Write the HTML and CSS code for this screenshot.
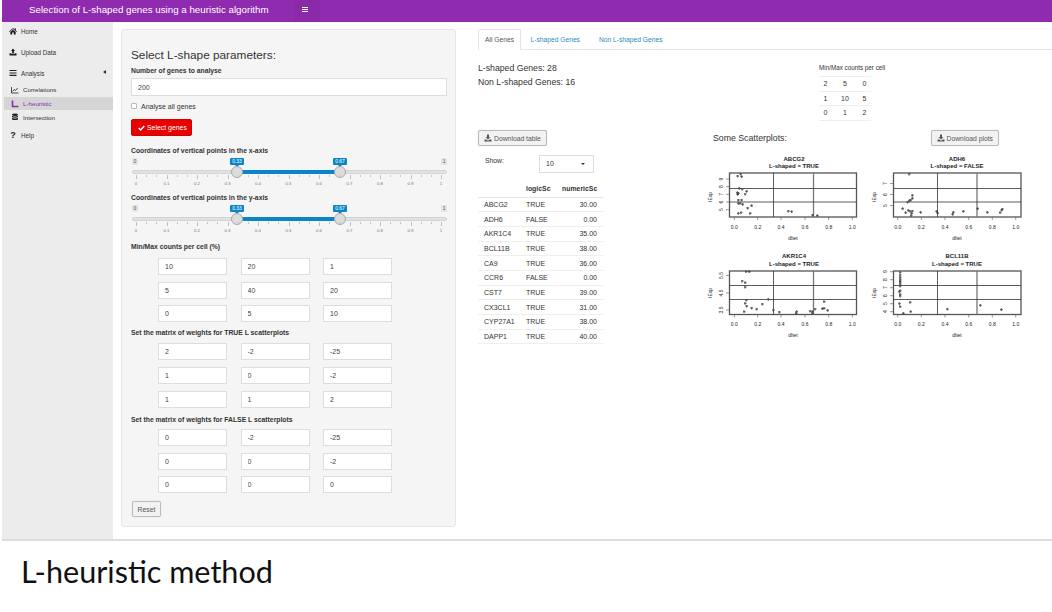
FILE: index.html
```html
<!DOCTYPE html>
<html lang="en">
<head>
    <meta charset="UTF-8">
    <title>Selection of L-shaped genes</title>
    <link rel="stylesheet" href="styles.css">
</head>
<body>
    <div class="app">
        <header class="topbar">
            <div class="brand">Selection of L-shaped genes using a heuristic algorithm</div>
            <div class="toggle">
                <svg width="6" height="5" viewBox="0 0 6 5"><path d="M0 0h6v1H0zM0 2h6v1H0zM0 4h6v1H0z" fill="#fff"/></svg>
            </div>
        </header>

        <div class="body-row">
            <nav class="sidebar">
                <a class="nav-item">
                    <svg class="nav-icon" viewBox="0 0 8 8"><path d="M4 1 0 4.400l.5.5L4 2l3.500 2.900.5-.5-1.200-1V1.200h-1v1.300zM1.300 5 4 2.800 6.700 5v2.400H4.800V5.600H3.200v1.800H1.300z" fill="#222"/></svg>
                    Home
                </a>
                <a class="nav-item">
                    <svg class="nav-icon" viewBox="0 0 8 8"><path d="M4 .5 6 3H4.900v2.400H3.100V3H2zM.5 5.200h2v.9h3v-.9h2v2.300h-7z" fill="#222"/></svg>
                    Upload Data
                </a>
                <a class="nav-item">
                    <svg class="nav-icon" viewBox="0 0 8 8"><path d="M.5 1h7v1.100h-7zM.5 3.400h7v1.100h-7zM.5 5.800h7v1.100h-7z" fill="#222"/></svg>
                    Analysis
                    <span class="caret"></span>
                </a>
                <a class="sub-item">
                    <svg class="nav-icon" viewBox="0 0 8 8"><path d="M.5 1v6h7" fill="none" stroke="#222" stroke-width=".8"/><path d="m1.500 5.500 1.700-2 1.300 1 2.200-2.500" fill="none" stroke="#222" stroke-width=".8"/></svg>
                    Correlations
                </a>
                <a class="sub-item active">
                    <svg class="nav-icon" viewBox="0 0 8 8"><path d="M1.500 .5v6h6" fill="none" stroke="#8e2bb0" stroke-width="1.600"/></svg>
                    L-heuristic
                </a>
                <a class="sub-item">
                    <svg class="nav-icon" viewBox="0 0 8 8"><ellipse cx="4" cy="1.800" rx="3" ry="1.200" fill="#222"/><path d="M1 2.700c1 1 5 1 6 0v1.400c-1 1-5 1-6 0zM1 4.800c1 1 5 1 6 0v1.400c-1 1.200-5 1.200-6 0z" fill="#222"/></svg>
                    Intersection
                </a>
                <a class="nav-item">
                    <span class="nav-icon help">?</span>
                    Help
                </a>
            </nav>

            <main class="content">
                <section class="panel">
                    <h2>Select L-shape parameters:</h2>
                    <label class="field-label">Number of genes to analyse</label>
                    <input class="text-input" type="text" value="200">
                    <label class="check-row"><span class="check-box"></span>Analyse all genes</label>
                    <button class="btn-select">
                        <svg width="7" height="6" viewBox="0 0 7 6"><path d="M.7 3 2.700 5 6.300 1" fill="none" stroke="#fff" stroke-width="1.500"/></svg>
                        Select genes
                    </button>

                    <label class="field-label slider-label">Coordinates of vertical points in the x-axis</label>
                    <div class="slider">
                        <span class="end end-min">0</span>
                        <span class="end end-max">1</span>
                        <span class="tip tip-from">0.33</span>
                        <span class="tip tip-to">0.67</span>
                        <div class="track"></div>
                        <div class="bar"></div>
                        <span class="handle handle-from"></span>
                        <span class="handle handle-to"></span>
                        <div class="ticks"></div>
                        <div class="tick-labels">
                            <span>0</span><span>0.1</span><span>0.2</span><span>0.3</span><span>0.4</span><span>0.5</span><span>0.6</span><span>0.7</span><span>0.8</span><span>0.9</span><span>1</span>
                        </div>
                    </div>

                    <label class="field-label">Coordinates of vertical points in the y-axis</label>
                    <div class="slider">
                        <span class="end end-min">0</span>
                        <span class="end end-max">1</span>
                        <span class="tip tip-from">0.33</span>
                        <span class="tip tip-to">0.67</span>
                        <div class="track"></div>
                        <div class="bar"></div>
                        <span class="handle handle-from"></span>
                        <span class="handle handle-to"></span>
                        <div class="ticks"></div>
                        <div class="tick-labels">
                            <span>0</span><span>0.1</span><span>0.2</span><span>0.3</span><span>0.4</span><span>0.5</span><span>0.6</span><span>0.7</span><span>0.8</span><span>0.9</span><span>1</span>
                        </div>
                    </div>

                    <label class="field-label counts-label">Min/Max counts per cell (%)</label>
                    <div class="matrix">
                        <input type="text" value="10"><input type="text" value="20"><input type="text" value="1">
                        <input type="text" value="5"><input type="text" value="40"><input type="text" value="20">
                        <input type="text" value="0"><input type="text" value="5"><input type="text" value="10">
                    </div>

                    <label class="field-label true-label">Set the matrix of weights for TRUE L scatterplots</label>
                    <div class="matrix true-matrix">
                        <input type="text" value="2"><input type="text" value="-2"><input type="text" value="-25">
                        <input type="text" value="1"><input type="text" value="0"><input type="text" value="-2">
                        <input type="text" value="1"><input type="text" value="1"><input type="text" value="2">
                    </div>

                    <label class="field-label false-label">Set the matrix of weights for FALSE L scatterplots</label>
                    <div class="matrix false-matrix">
                        <input type="text" value="0"><input type="text" value="-2"><input type="text" value="-25">
                        <input type="text" value="0"><input type="text" value="0"><input type="text" value="-2">
                        <input type="text" value="0"><input type="text" value="0"><input type="text" value="0">
                    </div>

                    <button class="btn btn-reset">Reset</button>
                </section>

                <section class="results">
                    <div class="tabs">
                        <a class="tab active">All Genes</a>
                        <a class="tab">L-shaped Genes</a>
                        <a class="tab">Non L-shaped Genes</a>
                    </div>

                    <div class="summary-row">
                        <div class="counts">
                            <p>L-shaped Genes: 28</p>
                            <p>Non L-shaped Genes: 16</p>
                        </div>
                        <div class="minmax">
                            <div class="minmax-title">Min/Max counts per cell</div>
                            <table>
                                <tr><td>2</td><td>5</td><td>0</td></tr>
                                <tr><td>1</td><td>10</td><td>5</td></tr>
                                <tr><td>0</td><td>1</td><td>2</td></tr>
                            </table>
                        </div>
                    </div>

                    <div class="detail-row">
                        <div class="table-col">
                            <button class="btn">
                                <svg width="8" height="8" viewBox="0 0 8 8"><path d="M3 .5h2v2.700h1.500L4 5.600 1.500 3.200H3zM.5 5.500h1.700L4 6.800l1.800-1.300h1.700v2h-7z" fill="#555"/></svg>
                                Download table
                            </button>
                            <div class="show-row">
                                <span class="show-label">Show:</span>
                                <div class="select-box">10<span class="select-caret"></span></div>
                            </div>
                            <table class="gene-table">
                                <thead>
                                    <tr><th></th><th>logicSc</th><th class="num">numericSc</th></tr>
                                </thead>
                                <tbody>
                                    <tr><td>ABCG2</td><td>TRUE</td><td class="num">30.00</td></tr>
                                    <tr><td>ADH6</td><td>FALSE</td><td class="num">0.00</td></tr>
                                    <tr><td>AKR1C4</td><td>TRUE</td><td class="num">35.00</td></tr>
                                    <tr><td>BCL11B</td><td>TRUE</td><td class="num">38.00</td></tr>
                                    <tr><td>CA9</td><td>TRUE</td><td class="num">36.00</td></tr>
                                    <tr><td>CCR6</td><td>FALSE</td><td class="num">0.00</td></tr>
                                    <tr><td>CST7</td><td>TRUE</td><td class="num">39.00</td></tr>
                                    <tr><td>CX3CL1</td><td>TRUE</td><td class="num">31.00</td></tr>
                                    <tr><td>CYP27A1</td><td>TRUE</td><td class="num">38.00</td></tr>
                                    <tr><td>DAPP1</td><td>TRUE</td><td class="num">40.00</td></tr>
                                </tbody>
                            </table>
                        </div>

                        <div class="plots-col">
                            <div class="plots-head">
                                <span>Some Scatterplots:</span>
                                <button class="btn">
                                    <svg width="8" height="8" viewBox="0 0 8 8"><path d="M3 .5h2v2.700h1.500L4 5.600 1.500 3.200H3zM.5 5.500h1.700L4 6.800l1.800-1.300h1.700v2h-7z" fill="#555"/></svg>
                                    Download plots
                                </button>
                            </div>
                            <div class="plots">
                                <svg class="plot" viewBox="0 0 180 95" width="180" height="95">
                                    <defs>
                                        <marker id="plus" viewBox="0 0 3 3" refX="1.500" refY="1.500" markerWidth="3" markerHeight="3" markerUnits="userSpaceOnUse">
                                            <path d="M0 1.500h3M1.500 0v3" stroke="#444" stroke-width=".55" fill="none"/>
                                        </marker>
                                    </defs>
                                    <g transform="translate(10 0)">
                                        <text class="plot-title" x="94" y="10.500">ABCG2</text>
                                        <text class="plot-title" x="94" y="18">L-shaped =  TRUE</text>
                                        <rect class="frame" x="29.500" y="23" width="127" height="44"/>
                                        <path class="vline" d="M73.500 23v44"/>
                                        <path class="vline thick" d="M113.500 23v44"/>
                                        <path class="vline" d="M29.500 38.500h127M29.500 52h127"/>
                                        <path class="axis" d="M34.300 67v3M57.700 67v3M81 67v3M105 67v3M128.700 67v3M152.300 67v3M26 29h3.500M26 36.700h3.500M26 44.300h3.500M26 52h3.500M26 59.700h3.500"/>
                                        <g class="tick-y"><text transform="translate(23 29) rotate(-90)">9</text><text transform="translate(23 36.700) rotate(-90)">8</text><text transform="translate(23 44.300) rotate(-90)">7</text><text transform="translate(23 52) rotate(-90)">6</text><text transform="translate(23 59.700) rotate(-90)">5</text></g>
                                        <g class="tick-x"><text x="34.300" y="78.500">0.0</text><text x="57.700" y="78.500">0.2</text><text x="81" y="78.500">0.4</text><text x="105" y="78.500">0.6</text><text x="128.700" y="78.500">0.8</text><text x="152.300" y="78.500">1.0</text></g>
                                        <text class="axis-name" x="93" y="89.500">dltet</text>
                                        <text class="axis-name" transform="translate(12 47) rotate(-90)">tExp</text>
                                        <path class="points" marker-start="url(#plus)" marker-mid="url(#plus)" marker-end="url(#plus)" d="M40.700 24h0M37.700 26h0M41.700 26.700h0M39.300 38.300h0M42 39h0M37.300 42.700h0M38.300 43.300h0M37.700 44.300h0M46.700 41.300h0M45 44h0M38.300 50h0M41.700 50h0M38.300 53.300h0M40 53.300h0M42.700 54.300h0M51.700 55.700h0M47.700 58h0M41 62.700h0M38.300 63.300h0M50 63.300h0M88.300 61h0M91.700 61.700h0M112.700 65h0M117.300 65.700h0"/>
                                    </g>
                                </svg>
                                <svg class="plot" viewBox="0 0 180 95" width="180" height="95">
                                    <g transform="translate(10 0)">
                                        <text class="plot-title" x="77" y="10.500">ADH6</text>
                                        <text class="plot-title" x="77" y="18">L-shaped =  FALSE</text>
                                        <rect class="frame" x="13.500" y="23" width="127.500" height="44"/>
                                        <path class="vline" d="M57.500 23v44"/>
                                        <path class="vline thick" d="M97 23v44"/>
                                        <path class="vline" d="M13.500 38.500H141M13.500 52H141"/>
                                        <path class="axis" d="M17.700 67v3M41.300 67v3M65 67v3M88.700 67v3M112.300 67v3M135.700 67v3M10 33.500h3.500M10 44.500h3.500M10 55.500h3.500"/>
                                        <g class="tick-y"><text transform="translate(6.500 33.500) rotate(-90)">7</text><text transform="translate(6.500 44.500) rotate(-90)">6</text><text transform="translate(6.500 55.500) rotate(-90)">5</text></g>
                                        <g class="tick-x"><text x="17.700" y="78.500">0.0</text><text x="41.300" y="78.500">0.2</text><text x="65" y="78.500">0.4</text><text x="88.700" y="78.500">0.6</text><text x="112.300" y="78.500">0.8</text><text x="135.700" y="78.500">1.0</text></g>
                                        <text class="axis-name" x="77" y="89.500">dltet</text>
                                        <text class="axis-name" transform="translate(-4 47) rotate(-90)">tExp</text>
                                        <path class="points" marker-start="url(#plus)" marker-mid="url(#plus)" marker-end="url(#plus)" d="M29 24h0M32.300 45.300h0M32.300 48.300h0M30.700 50h0M29.300 50.700h0M27.700 52h0M22.700 58.700h0M25.700 62.700h0M28.300 60.300h0M30 61.300h0M32.300 61h0M31.700 63.300h0M31 65.700h0M40.700 62.300h0M56.700 61.300h0M57.700 63h0M73.300 62.300h0M72.700 64.300h0M83.300 61.300h0M97.700 58.700h0M107.300 62.300h0M122.300 59h0M120 62.700h0M121.700 60h0"/>
                                    </g>
                                </svg>
                                <svg class="plot" viewBox="0 0 180 95" width="180" height="95">
                                    <g transform="translate(10 0)">
                                        <text class="plot-title" x="94" y="13">AKR1C4</text>
                                        <text class="plot-title" x="94" y="20.500">L-shaped =  TRUE</text>
                                        <rect class="frame" x="29.500" y="26" width="127" height="43.500"/>
                                        <path class="vline" d="M73.500 26v43.500"/>
                                        <path class="vline thick" d="M113.500 26v43.500"/>
                                        <path class="vline" d="M29.500 40.500h127M29.500 54.500h127"/>
                                        <path class="axis" d="M34.300 69.500v3M57.700 69.500v3M81 69.500v3M105 69.500v3M128.700 69.500v3M152.300 69.500v3M26 30.500h3.500M26 48h3.500M26 65h3.500"/>
                                        <g class="tick-y"><text transform="translate(23 30.500) rotate(-90)">5.5</text><text transform="translate(23 48) rotate(-90)">4.5</text><text transform="translate(23 65) rotate(-90)">3.5</text></g>
                                        <g class="tick-x"><text x="34.300" y="80.500">0.0</text><text x="57.700" y="80.500">0.2</text><text x="81" y="80.500">0.4</text><text x="105" y="80.500">0.6</text><text x="128.700" y="80.500">0.8</text><text x="152.300" y="80.500">1.0</text></g>
                                        <text class="axis-name" x="93" y="92.300">dltet</text>
                                        <text class="axis-name" transform="translate(12 48) rotate(-90)">tExp</text>
                                        <path class="points" marker-start="url(#plus)" marker-mid="url(#plus)" marker-end="url(#plus)" d="M46 26.700h0M49.300 26.700h0M42 36h0M45 37.700h0M45 42h0M46.300 55h0M45 58.300h0M46.700 61h0M51.700 63h0M56.700 64h0M62.300 59h0M68.300 54.300h0M44 66.700h0M73.300 65h0M79.300 67h0M96.700 66.700h0M96 68.300h0M110 66h0M112.300 66.700h0M115 64h0M124 56.700h0M122.300 63.700h0M124 63.300h0M127.700 65.300h0M112.300 68.300h0"/>
                                    </g>
                                </svg>
                                <svg class="plot" viewBox="0 0 180 95" width="180" height="95">
                                    <g transform="translate(10 0)">
                                        <text class="plot-title" x="77" y="13">BCL11B</text>
                                        <text class="plot-title" x="77" y="20.500">L-shaped =  TRUE</text>
                                        <rect class="frame" x="13.500" y="26" width="127.500" height="43.500"/>
                                        <path class="vline" d="M57.500 26v43.500"/>
                                        <path class="vline thick" d="M97 26v43.500"/>
                                        <path class="vline" d="M13.500 40.500H141M13.500 54.500H141"/>
                                        <path class="axis" d="M17.700 69.500v3M41.300 69.500v3M65 69.500v3M88.700 69.500v3M112.300 69.500v3M135.700 69.500v3M10 66.700h3.500M10 58.700h3.500M10 50.700h3.500M10 42.700h3.500M10 34.700h3.500M10 26.700h3.500"/>
                                        <g class="tick-y"><text transform="translate(6.500 66.700) rotate(-90)">4</text><text transform="translate(6.500 58.700) rotate(-90)">5</text><text transform="translate(6.500 50.700) rotate(-90)">6</text><text transform="translate(6.500 42.700) rotate(-90)">7</text><text transform="translate(6.500 34.700) rotate(-90)">8</text><text transform="translate(6.500 26.700) rotate(-90)">9</text></g>
                                        <g class="tick-x"><text x="17.700" y="80.500">0.0</text><text x="41.300" y="80.500">0.2</text><text x="65" y="80.500">0.4</text><text x="88.700" y="80.500">0.6</text><text x="112.300" y="80.500">0.8</text><text x="135.700" y="80.500">1.0</text></g>
                                        <text class="axis-name" x="77" y="92.300">dltet</text>
                                        <text class="axis-name" transform="translate(-4 48) rotate(-90)">tExp</text>
                                        <path class="points" marker-start="url(#plus)" marker-mid="url(#plus)" marker-end="url(#plus)" d="M20 27.300h0M20 30h0M20 32.300h0M20 34.300h0M20 36h0M20 37.300h0M20 39.300h0M20 41h0M20 45.700h0M19.300 46.700h0M20 49.300h0M20 51h0M19.300 58.700h0M20 61.700h0M30 57.300h0M30.700 66.700h0M23.300 68.300h0M67.300 64h0M100.300 60.300h0M121.300 64.700h0"/>
                                    </g>
                                </svg>
                            </div>
                        </div>
                    </div>
                </section>
            </main>
        </div>
    </div>

    <div class="caption">L-heuristic method</div>
</body>
</html>
```

FILE: styles.css
```css
* {
    box-sizing: border-box;
}

body {
    font-family: "Liberation Sans", Arial, sans-serif;
    font-size: 7px;
    color: #333;
    margin: 0;
    height: 612px;
    overflow: hidden;
    background-color: white;
}

.app {
    height: 541px;
    margin-left: 2px;
    border-bottom: 2px solid #ddd;
    display: flex;
    flex-direction: column;
}

/* Top bar */
.topbar {
    height: 22px;
    flex-shrink: 0;
    display: flex;
    background-color: #8e2bae;
    color: white;
}

.brand {
    width: 293px;
    padding-left: 27px;
    font-size: 9.750px;
    line-height: 19px;
}

.toggle {
    width: 25px;
    padding: 7px 0 0 7px;
    background-color: #8a2aa8;
}

.toggle svg {
    display: block;
}

.body-row {
    flex: 1;
    display: flex;
    min-height: 0;
}

/* Sidebar */
.sidebar {
    width: 111px;
    flex-shrink: 0;
    background-color: #ececec;
    color: #333;
}

.nav-item {
    display: flex;
    align-items: center;
    height: 21px;
    padding: 0 0 3px 7px;
    font-size: 6.300px;
    gap: 4px;
    position: relative;
}

.sub-item {
    display: flex;
    align-items: center;
    height: 13.700px;
    margin-left: 2px;
    padding-left: 7px;
    font-size: 6.200px;
    gap: 4px;
}

.nav-item + .sub-item {
    margin-top: -2px;
}

.sub-item + .nav-item {
    margin-top: 2px;
}

.sub-item.active {
    background-color: #d5d5d5;
    color: #8e2bae;
}

.nav-icon {
    width: 8px;
    height: 8px;
    flex-shrink: 0;
}

.help {
    font-size: 9px;
    font-weight: bold;
    line-height: 8px;
    text-align: center;
    color: #222;
}

.caret {
    position: absolute;
    right: 7px;
    top: 6px;
    border-style: solid;
    border-width: 2.500px 3px 2.500px 0;
    border-color: transparent #333 transparent transparent;
}

/* Main area */
.content {
    flex: 1;
    display: flex;
    gap: 22px;
    padding: 7px 0 0 8px;
    min-width: 0;
}

.panel {
    width: 335px;
    height: 498px;
    flex-shrink: 0;
    padding: 17px 8px 0 9px;
    background-color: #f5f5f5;
    border: 1px solid #e6e6e6;
    border-radius: 3px;
}

h2 {
    font-weight: normal;
    font-size: 11.800px;
    line-height: 16px;
    margin: 0;
}

.field-label {
    display: block;
    font-weight: bold;
    font-size: 6.800px;
    line-height: 10px;
}

h2 + .field-label {
    margin-top: 3px;
}

input {
    font-family: inherit;
    font-size: 7px;
    color: #444;
    background-color: white;
    border: 1px solid #ddd;
    padding: 0 0 0 6px;
    outline: none;
    min-width: 0;
    width: 100%;
}

.text-input {
    display: block;
    height: 18px;
    margin-top: 2px;
}

.check-row {
    display: flex;
    align-items: center;
    gap: 4px;
    height: 10px;
    margin-top: 5px;
    font-size: 7px;
}

.check-box {
    width: 6px;
    height: 6px;
    background-color: white;
    border: 1px solid #bbb;
    border-radius: 1px;
}

.btn-select {
    display: flex;
    align-items: center;
    gap: 2px;
    width: 61px;
    height: 17px;
    margin-top: 8px;
    padding: 0 0 0 6px;
    font-family: inherit;
    font-size: 6.900px;
    color: white;
    background-color: #e60000;
    border: 1px solid #d40000;
    border-radius: 2px;
}

.slider-label {
    margin-top: 10px;
}

/* Range sliders */
.slider {
    position: relative;
    height: 37px;
}

.end {
    position: absolute;
    top: 2px;
    padding: 0 1.500px;
    height: 7px;
    line-height: 7px;
    font-size: 5px;
    color: #555;
    background-color: #e4e4e4;
    border-radius: 1px;
}

.end-min {
    left: 1px;
}

.end-max {
    right: 0;
}

.tip {
    position: absolute;
    top: 2px;
    width: 14px;
    height: 7px;
    line-height: 7px;
    font-size: 5px;
    text-align: center;
    color: white;
    background-color: #0a85c8;
    border-radius: 1px;
}

.tip::after {
    content: "";
    position: absolute;
    left: 5px;
    top: 7px;
    border-style: solid;
    border-width: 2px 2px 0;
    border-color: #0a85c8 transparent transparent;
}

.tip-from {
    left: 99px;
}

.tip-to {
    left: 202px;
}

.track {
    position: absolute;
    left: 1px;
    right: 0;
    top: 14px;
    height: 4px;
    background-color: #e2e2e2;
    border: 1px solid #d4d4d4;
    border-radius: 2px;
}

.bar {
    position: absolute;
    left: 106px;
    width: 103px;
    top: 14px;
    height: 4px;
    background-color: #0a85c8;
}

.handle {
    position: absolute;
    top: 10px;
    width: 12px;
    height: 12px;
    background-color: #dcdcdc;
    border: 1px solid #aaa;
    border-radius: 50%;
}

.handle-from {
    left: 100px;
}

.handle-to {
    left: 203px;
}

.ticks {
    position: absolute;
    left: 5px;
    width: 306px;
    top: 19px;
    height: 4px;
    background-image:
        repeating-linear-gradient(90deg, #9ccbe8 0 1px, transparent 1px 30.500px),
        repeating-linear-gradient(90deg, #c4c4c4 0 1px, transparent 1px 10.170px);
    background-size: 100% 4px, 100% 2px;
    background-repeat: no-repeat;
}

.tick-labels {
    position: absolute;
    left: 5px;
    width: 305px;
    top: 25px;
    display: flex;
    justify-content: space-between;
    font-size: 4.400px;
    line-height: 6px;
    color: #777;
}

.tick-labels span {
    width: 0;
    display: flex;
    justify-content: center;
}

/* Input grids */
.counts-label {
    margin-top: 2px;
}

.matrix {
    display: grid;
    grid-template-columns: repeat(3, 69px);
    column-gap: 13.500px;
    row-gap: 6.500px;
    margin: 6px 0 0 27px;
}

.matrix input {
    height: 17px;
}

.true-label {
    margin-top: 6px;
}

.true-matrix {
    margin-top: 5px;
    row-gap: 7px;
}

.false-label {
    margin-top: 7px;
}

.false-matrix {
    margin-top: 4px;
}

.btn {
    display: inline-flex;
    align-items: center;
    gap: 2px;
    height: 16px;
    padding: 0 5px;
    font-family: inherit;
    font-size: 6.800px;
    color: #555;
    background-color: #f2f2f2;
    border: 1px solid #bbb;
    border-radius: 2px;
    box-shadow: 0 0 1px rgba(0,0,0,0.2);
}

.btn-reset {
    display: block;
    width: 29px;
    margin: 8px 0 0 1px;
    padding: 0;
}

/* Right side */
.results {
    flex: 1;
    min-width: 0;
}

.tabs {
    display: flex;
    height: 21px;
    border-bottom: 1px solid #e4e4e4;
    font-size: 6.700px;
}

.tab {
    padding: 0 8.500px;
    line-height: 19px;
    color: #2b8cbe;
    border: 1px solid transparent;
    border-bottom: none;
}

.tab.active {
    padding: 0 6px;
    color: #555;
    height: 21px;
    background-color: white;
    border-color: #e4e4e4;
    border-radius: 2px 2px 0 0;
}

.summary-row {
    display: flex;
    height: 80px;
}

.counts {
    width: 341px;
    padding-top: 11px;
    font-size: 8.700px;
    line-height: 14px;
}

.counts p {
    margin: 0;
}

.minmax {
    width: 72px;
}

.minmax-title {
    font-size: 6.300px;
    line-height: 8px;
    margin-top: 14px;
    white-space: nowrap;
}

.minmax table {
    width: 52px;
    margin-top: 4px;
    border-collapse: collapse;
    border-bottom: 1px solid #eee;
    font-size: 7px;
}

.minmax td {
    height: 14.500px;
    padding: 0;
    text-align: center;
    border-top: 1px solid #eee;
}

.detail-row {
    display: flex;
}

.table-col {
    width: 212px;
    flex-shrink: 0;
}

.show-row {
    display: flex;
    margin-top: 9px;
    height: 18px;
}

.show-label {
    width: 61px;
    padding: 2px 0 0 7px;
    font-size: 6.800px;
}

.select-box {
    width: 55px;
    height: 18px;
    padding: 0 6px;
    font-size: 7px;
    line-height: 16px;
    background-color: white;
    border: 1px solid #ddd;
    position: relative;
}

.select-caret {
    position: absolute;
    right: 8px;
    top: 7px;
    border-style: solid;
    border-width: 2.500px 2.500px 0;
    border-color: #333 transparent transparent;
}

.gene-table {
    width: 125px;
    margin-top: 8px;
    border-collapse: collapse;
    table-layout: fixed;
    font-size: 7px;
}

.gene-table th {
    height: 16px;
    padding: 0 6px;
    font-weight: bold;
    font-size: 6.900px;
    text-align: left;
    border-bottom: 1px solid #e4e4e4;
}

.gene-table th:first-child {
    width: 42px;
}

.gene-table th:nth-child(2) {
    width: 42px;
}

.gene-table th.num {
    padding: 0 6px 0 0;
}

.gene-table td {
    height: 14.700px;
    padding: 0 6px;
    border-bottom: 1px solid #efefef;
    white-space: nowrap;
}

.gene-table .num {
    text-align: right;
}

.plots-col {
    flex: 1;
    min-width: 0;
}

.plots-head {
    display: flex;
    align-items: flex-start;
    justify-content: space-between;
    height: 20px;
    padding: 0 53px 0 23px;
    font-size: 8.750px;
    line-height: 16px;
}

.plots {
    display: grid;
    grid-template-columns: repeat(2, 180px);
}

/* Base R style plots */
.plot {
    display: block;
    overflow: visible;
}

.plot text {
    font-family: "Liberation Sans", Arial, sans-serif;
    text-anchor: middle;
    fill: #222;
}

.plot-title {
    font-size: 6px;
    font-weight: bold;
}

.frame {
    fill: none;
    stroke: #555;
    stroke-width: 1.300;
}

.vline {
    fill: none;
    stroke: #333;
    stroke-width: .8;
}

.vline.thick {
    stroke: #777;
    stroke-width: 1.300;
}

.axis {
    fill: none;
    stroke: #555;
    stroke-width: .6;
}

.tick-x text,
.tick-y text,
.axis-name {
    font-size: 5px;
}

.points {
    fill: none;
    stroke: none;
}

/* Slide caption below the screenshot */
.caption {
    margin-left: 21px;
    margin-top: 13px;
    font-family: Lato, "Open Sans", sans-serif;
    font-size: 30.600px;
    line-height: 36px;
    color: #111;
}
```
